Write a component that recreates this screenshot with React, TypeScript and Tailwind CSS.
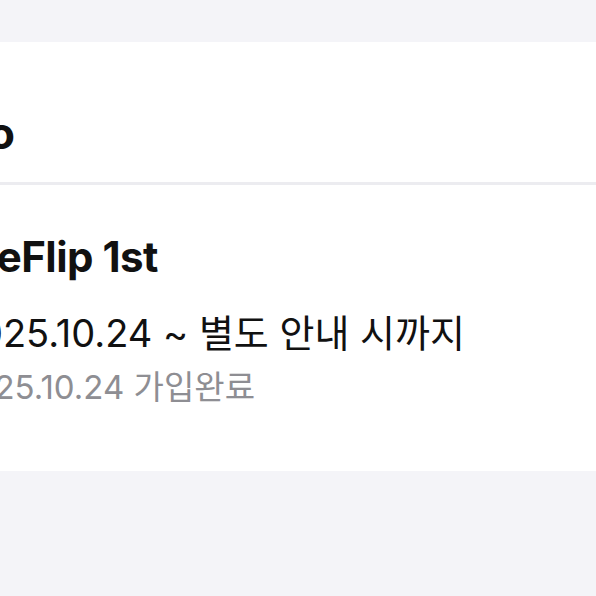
import React from "react";

export default function App() {
  const font = { fontFamily: 'Inter, "Noto Sans CJK KR", sans-serif' };
  return (
    <div className="w-[596px] h-[596px] overflow-hidden bg-[#f4f4f8]" style={font}>
      <div className="h-[42px]" />
      <div className="bg-white">
        <div className="h-[140px] flex items-start pt-[69px]">
          <div className="w-[15px] flex justify-end whitespace-nowrap text-[44px] font-bold text-[#111] leading-none">
            Info
          </div>
        </div>
        <div className="h-[3px] bg-[#ececf0]" />
        <div className="h-[286px] flex flex-col">
          <div className="pt-[47px] w-[158px] flex justify-end whitespace-nowrap text-[42px] font-bold text-[#111] leading-[50px] tracking-[-0.5px]">
            WeFlip 1st
          </div>
          <div className="pt-[29px] w-[465px] flex justify-end whitespace-nowrap text-[38px] text-[#111] leading-[44px]">
            2025.10.24 ~ 별도 안내 시까지
          </div>
          <div className="pt-[12px] w-[255px] flex justify-end whitespace-nowrap text-[33px] text-[#8e8e93] leading-[40px]">
            2025.10.24 가입완료
          </div>
        </div>
      </div>
    </div>
  );
}
